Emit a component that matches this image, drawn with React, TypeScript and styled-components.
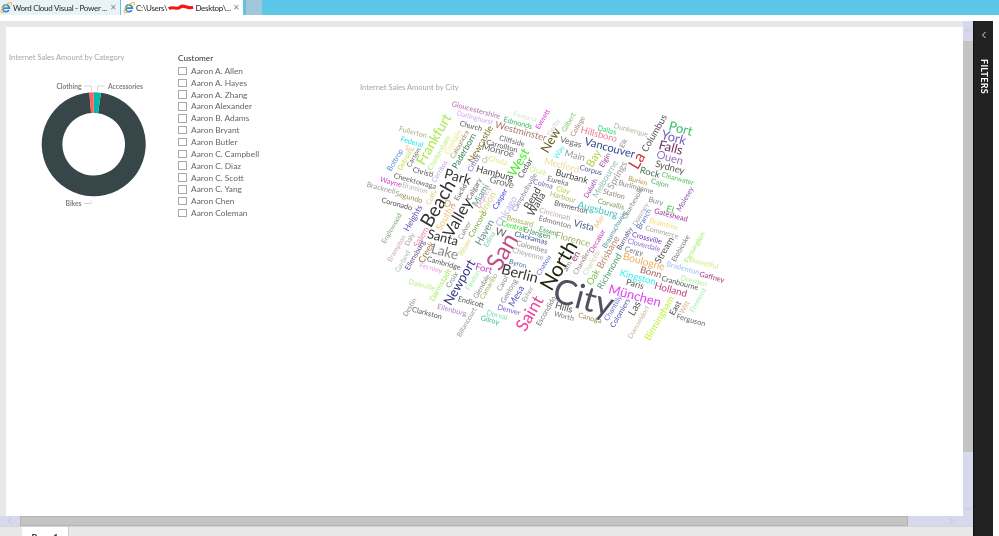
import React from "react";
import styled, { createGlobalStyle } from "styled-components";

const Global = createGlobalStyle`
  html, body { margin: 0; padding: 0; background: #fff; }
  body { font-family: Lato, "Open Sans", "Liberation Sans", sans-serif; }
`;

type W = [string, number, number, number, string, number?];
const words: W[] = [
  ["Gloucestershire",476,110,8.5,"#b070b0"],["Darlinghurst",475,117,8,"#d9a8f0"],["Fontana",525,116,8,"#cfeacc"],["Edmonds",518,123,8.5,"#3fb56a"],
  ["Everett",542,119,8,"#d030d0",-60],["Westminster",521,131,11,"#a87868"],["Church",471,126,8.5,"#555"],["Fullerton",413,132,8.5,"#b0b088"],
  ["Frankfurt",433,139,16,"#a8e850",-60],["Federal",412,142,8.5,"#20e8e8"],["Sur",410,148,8,"#f8b878"],["Bottrop",395,160,8.5,"#5590d8",-60],
  ["Detroit",404,160,8,"#c0e050",-60],["Carson",413,157,8,"#666",-60],["Cheltenham",439,153,8.5,"#b8f080",-60],["Chehalis",453,142,8.5,"#f0e880",-60],
  ["Caloundra",459,144,8,"#a09060",-60],["Paderborn",464,151,10,"#308050",-60],["Newcastle",480,144,10.5,"#807020",-60],["Cliffside",512,141,8.5,"#666"],
  ["Carrollton",502,146,8.5,"#555"],["Monroe",498,150,11,"#666"],["Chula",498,160,9,"#e8e880"],["Or",485,159,8,"#aaa",-60],["Citrus",474,163,8.5,"#8070c0",-60],
  ["Cerritos",439,171,8,"#b0a0e0",-60],["Christi",423,172,8.5,"#555"],["Cheektowaga",415,181,8.5,"#666"],["Branson",415,188,8.5,"#bbb"],["Wayne",391,182,8.5,"#d040d0"],
  ["Bracknell",381,188,8.5,"#999"],["Segundo",409,197,8.5,"#a09060"],["Coronado",397,204,8.5,"#555"],["Park",458,176,16,"#333"],["Hamburg",495,173,11,"#444"],
  ["Grove",502,182,11,"#666"],["West",518,162,15,"#40f020",-60],["Cedar",525,168,9.5,"#555",-60],["Chalk",538,171,8.5,"#d0f090"],["Colma",543,184,8.5,"#8060b0"],
  ["Campbellsville",524,192,8,"#8080a0",-60],["Bend",532,198,12,"#444",-60],["Walla",536,204,12,"#444",-60],["Miami",480,195,10.5,"#60a080",-60],["Calgary",474,189,8.5,"#666",-60],
  ["Euclid",460,192,8,"#666",-60],["Coffs",431,197,8,"#d0d080",-60],["Beach",437,203,22,"#333",-60],["De",450,204,11,"#c0a870"],["South",444,219,11,"#f0c870",-60],
  ["Valley",457,217,19,"#333",-60],["Santa",443,237,15,"#333"],["Culver",464,230,8,"#888",-60],["Concord",477,224,9,"#70a030",-60],["Haven",484,232,11.5,"#608888",-60],
  ["Union",487,203,11,"#d8d880",-60],["Drancy",483,197,9,"#e0a0e0",-60],["Edina",489,239,8,"#80d0a0",-60],["Casper",500,199,8.5,"#4040e0",-60],["Chicago",506,211,11,"#c0b0f0",-60],
  ["Brossard",520,221,8.5,"#a8b050"],["Central",513,226,8.5,"#30e030"],["Erlangen",537,233,8.5,"#409060"],["Essen",548,231,8.5,"#50a060"],["Clackamas",531,238,8.5,"#405090"],
  ["W",501,232,12,"#666"],["Colombes",532,247,8.5,"#888"],["Cheyenne",528,254,8.5,"#aaa"],["San",501,251,28,"#c05088",-60],["Byron",518,263,8,"#5070a0"],["Berlin",520,273,17,"#333"],
  ["Chatou",543,265,8,"#6070d0",-60],["Lake",445,251,16,"#888"],["Ribier",465,247,8.5,"#e0e080",-60],["Creek",426,252,10.5,"#a07840",-60],["Salem",421,237,10,"#f080b0",-60],
  ["Heights",413,218,10,"#6050b0",-60],["Daly",409,239,8,"#999",-60],["Englewood",391,228,8,"#80a880",-60],["Brampton",396,248,8,"#d0a8b0",-60],["Garland",402,261,8,"#a8c0a8",-60],
  ["Ellensburg",415,255,8.5,"#604890",-60],["Cambridge",444,263,8.5,"#555"],["Fernley",431,268,8.5,"#f0a0e8"],["Fort",484,268,11,"#c040d0"],["Newport",459,282,15,"#303080",-60],
  ["Croix",452,280,8.5,"#888",-60],["Findon",473,280,8.5,"#a0f0a0",-60],["Glendale",481,286,8,"#888",-60],["Camarillo",488,286,8,"#a0b060",-60],["Carol",502,283,8,"#888",-60],
  ["Daleville",422,285,8.5,"#c0f090"],["Darmstadt",440,285,9,"#a0f060",-60],["Geelong",509,291,8.5,"#888",-60],["Mesa",516,296,11,"#5050c0",-60],["Esher",527,294,8,"#999",-60],
  ["Saint",529,313,20,"#f040a0",-60],["Endicott",471,302,8.5,"#555"],["Eilenburg",452,310,8.5,"#b080c8"],["Denver",509,310,8.5,"#8060d0"],["Dorval",497,315,8.5,"#80e0b0"],
  ["Gilroy",490,320,8.5,"#40c0a0"],["Billancourt",466,322,8,"#999",-60],["Destin",409,307,8,"#888",-60],["Clarkston",427,313,8.5,"#555"],["Escondido",546,311,8.5,"#777",-60],
  ["Bremerton",571,207,8.5,"#555"],["Augsburg",598,209,11.5,"#40c0c0"],["Corvallis",611,204,8.5,"#80a060"],["Courbevoie",632,203,8,"#888",-60],["Downey",640,214,8,"#aaa",-60],
  ["Branch",644,219,8.5,"#5070c0",-60],["Bury",656,201,8.5,"#888"],["El",670,209,11,"#50c050"],["Molesey",685,199,8.5,"#8050a0",-60],["Gateshead",671,215,8.5,"#a030a0"],
  ["Cincinnati",555,214,8.5,"#c0a8a8"],["Edmonton",555,222,8.5,"#777"],["Vista",584,225,11,"#406080"],["Mer",599,221,9,"#f0c080",-60],["Braintree",664,224,8.5,"#f0e080"],
  ["Commerce",662,232,8.5,"#aaa"],["Florence",573,239,11,"#a0b060"],["Decatur",597,241,8.5,"#c040c0",-60],["Braunschweig",614,229,8,"#5090a0",-60],["Burnaby",624,238,8,"#405080",-60],
  ["Brisbane",608,252,11,"#c08860",-60],["Crossville",647,238,8.5,"#7030c0"],["Cloverdale",644,245,8.5,"#9070d0"],["Cergy",634,251,8.5,"#777"],["Stream",664,250,11,"#555",-60],
  ["Etobicoke",680,248,8,"#777",-60],["Farmington",694,247,8,"#90f060",-60],["Bountiful",704,263,8.5,"#d0f080"],["Bradenton",683,268,8.5,"#a0c0f0"],["Gaffney",712,277,8.5,"#a04080"],
  ["Dresden",694,281,8.5,"#b0f0a0"],["Fremont",698,300,8.5,"#a0f0b0",-60],["Boulogne",644,261,12,"#f0b060"],["Bonn",651,272,11,"#a06060"],["Cranbourne",680,283,8.5,"#555"],
  ["Kingston",638,277,11,"#30f0f0"],["Paris",635,284,10,"#555"],["Holland",671,289,11.5,"#c04080"],["München",635,295,15,"#e040f0"],["Birmingham",659,318,11,"#c0f040",-60],
  ["East",675,308,9.5,"#444",-60],["Witt",684,307,8,"#d0b080",-60],["Ferguson",691,320,8.5,"#666"],["Duesseldorf",638,322,8,"#c8b8a0",-60],["Las",634,308,12,"#555",-60],
  ["Colomiers",620,313,8.5,"#5050a0",-60],["Chantilly",613,308,8.5,"#7070d0",-60],["City",584,296,40,"#555060"],["Hills",564,307,11,"#555"],["Worth",564,316,8.5,"#777"],
  ["Canoga",590,318,8.5,"#a09060"],["North",558,265,24,"#222810",-60],["Oak",593,277,11,"#80c050",-60],["Richmond",609,271,10.5,"#50a070",-60],["Charlotte",591,262,8,"#d0d0b0",-60],
  ["Chandler",581,262,8,"#a08080",-60],["en",575,256,11,"#a04070",-60],["am",567,266,9,"#888",-60],
  ["New",550,140,15,"#606020",-60],["Vegas",571,142,10,"#666"],["Way",559,152,8.5,"#40f0e0",-60],["Main",575,155,11,"#999"],["Medford",562,165,11,"#f0d8a0"],["Bay",593,158,13,"#b0d040",-60],
  ["Gilbert",568,122,8,"#80c060",-60],["College",577,126,8,"#a08878",-60],["Derby",553,127,8,"#ccc",-60],["Hillsboro",599,134,11,"#f08098"],["Dallas",607,130,8.5,"#30e070"],
  ["Dunkerque",631,130,8.5,"#b0b8a0"],["Vancouver",610,147,13,"#304890"],["Elk",623,143,8,"#888",-60],["Elgin",605,160,8.5,"#a04090",-60],["Columbus",654,133,11,"#555",-60],
  ["Port",681,128,15,"#30c060"],["York",674,137,15,"#7060c0"],["Falls",671,147,15,"#703060"],["Ouen",670,157,13,"#a070c0"],["Sydney",670,167,11,"#555"],["La",636,160,19,"#d03040",-60],
  ["Rock",650,172,11,"#407050"],["Clearwater",678,178,8,"#50c050"],["Cajon",660,183,8.5,"#60b070"],["Burien",638,180,8,"#c09040"],["Burlingame",636,187,8.5,"#888"],
  ["Springs",617,175,11,"#999",-60],["Melbourne",605,179,10,"#90c0b0",-60],["Duluth",590,188,8,"#a040a0",-60],["Corpus",591,170,8.5,"#6050a0"],["Burbank",572,176,10.5,"#444"],
  ["Eureka",558,181,8.5,"#666"],["Clay",563,190,8.5,"#c0d050"],["Harbour",563,197,8.5,"#b0c060"],["Station",614,194,8.5,"#988878"],
];

const customers = ["Aaron A. Allen","Aaron A. Hayes","Aaron A. Zhang","Aaron Alexander","Aaron B. Adams","Aaron Bryant","Aaron Butler","Aaron C. Campbell","Aaron C. Diaz","Aaron C. Scott","Aaron C. Yang","Aaron Chen","Aaron Coleman"];

const Page = styled.div`
  width: 999px; height: 536px; overflow: hidden; background: #fff;
  display: flex; flex-direction: column; filter: blur(0.3px);
`;
const TabStrip = styled.div`
  height: 15px; flex: none; display: flex; gap: 1px;
  background: linear-gradient(#58c6ea, #62c8e8);
`;
const Tab = styled.div<{ $active?: boolean; $w: number }>`
  width: ${p => p.$w}px; box-sizing: border-box; display: flex; align-items: center; gap: 1px;
  padding: 0 3px 0 ${p => (p.$active ? 2 : 0)}px; background: ${p => (p.$active ? "#fff" : "#e9f3f7")};
  font-size: 8px; letter-spacing: -0.3px; font-weight: 500; color: #333; white-space: nowrap; overflow: hidden;
`;
const TabLabel = styled.span`
  flex: 1; min-width: 0; display: flex; align-items: center;
`;
const Close = styled.span`
  color: #8a8a8a; font-size: 8px; line-height: 1; flex: none; font-family: "Liberation Sans", sans-serif;
`;
const EmptyTab = styled.div`
  width: 16px; background: #a0c8d8; border-left: 1px solid #7fb4c8; margin-left: 1px;
`;
const Gap = styled.div`height: 6px; flex: none; background: #fff;`;
const Body = styled.div`flex: 1; display: flex; min-height: 0; padding-right: 6px;`;
const Report = styled.div`
  width: 973px; flex: none; display: flex; flex-direction: column; background: #e8e8e8;
`;
const Work = styled.div`height: 495px; flex: none; display: flex;`;
const Surround = styled.div`
  width: 963px; flex: none; box-sizing: border-box; padding: 6px 0 0 6px; background: #e8e8e8; display: flex;
`;
const Canvas = styled.div`
  flex: 1; background: #fff; display: flex; padding-top: 26px; align-items: flex-start;
`;
const ChartCol = styled.div`width: 172px; flex: none;`;
const ChartTitle = styled.div<{ $indent?: number; $top?: number }>`
  font-size: 7.55px; line-height: 10px; color: #a6a6a6; white-space: nowrap;
  padding-left: ${p => p.$indent ?? 0}px; margin-top: ${p => p.$top ?? 0}px;
`;
const DonutSvg = styled.svg`
  display: block; width: 172px; height: 145px; margin-top: 2px;
  font-size: 6.7px; font-weight: 700; fill: #808080;
`;
const SlicerCol = styled.div`width: 182px; flex: none;`;
const SlicerHead = styled.div`font-size: 8.2px; line-height: 10px; color: #333; margin-bottom: 2px;`;
const SlicerRow = styled.div`
  height: 11.85px; display: flex; align-items: center; gap: 4.5px;
  font-size: 8.35px; color: #666; white-space: nowrap;
`;
const Box = styled.span`
  width: 6.5px; height: 6.5px; border: 1px solid #a8a8a8; flex: none;
`;
const CloudCol = styled.div`width: 380px; flex: none;`;
const CloudSvg = styled.svg`display: block; width: 380px; height: 250px; margin-top: 2px;`;
const VBar = styled.div`width: 10px; flex: none; display: flex; flex-direction: column; background: #d8d8ec;`;
const ArrowCell = styled.div<{ $h: number; $w?: number }>`
  height: ${p => p.$h}px; flex: none; display: flex; align-items: center; justify-content: center;
  width: ${p => (p.$w ? `${p.$w}px` : "auto")};
`;
const VThumb = styled.div`height: 411px; flex: none; background: #c4c4c4;`;
const VRest = styled.div`flex: 1; display: flex; align-items: flex-end; justify-content: center; padding-bottom: 3px;`;
const HBar = styled.div`height: 10px; flex: none; display: flex; background: #d8d8ec; box-sizing: border-box;`;
const HThumb = styled.div`width: 888px; flex: none; background: #c4c4c4; border: 1px solid #b4b4b4; box-sizing: border-box;`;
const HRest = styled.div`flex: 1; display: flex; justify-content: flex-end; align-items: center; padding-right: 18px;`;
const PageTabs = styled.div`flex: 1; min-height: 0; padding-left: 22px; background: #e8e8e8; border-top: 1px solid #d4d4d4;`;
const PageTab = styled.div`
  width: 47px; height: 100%; background: #fff; text-align: center; font-size: 9px; line-height: 21px;
  font-weight: 700; color: #333; overflow: hidden; border-right: 1px solid #ccc; box-sizing: border-box;
`;
const Filters = styled.div`
  width: 20px; flex: none; background: #222; border-left: 1px solid #111; box-sizing: border-box;
  display: flex; flex-direction: column; align-items: center; padding-top: 10px; gap: 20px;
`;
const FiltersLabel = styled.div`
  writing-mode: vertical-rl; color: #fff; font-size: 9px; font-weight: 700; letter-spacing: 0.3px; line-height: 10px;
`;
const Scribble = styled.svg`width: 26px; height: 8px; flex: none; margin: 0 1px;`;

const polar = (deg: number, r: number, cx = 93.7, cy = 144.3) => {
  const a = ((deg - 90) * Math.PI) / 180;
  return [cx + r * Math.cos(a), cy + r * Math.sin(a)];
};
const arc = (from: number, to: number) => {
  const [a, b] = polar(from, 52), [c, d] = polar(to, 52), [e, f] = polar(to, 31.3), [g, h] = polar(from, 31.3);
  const big = to - from > 180 ? 1 : 0;
  return `M${a} ${b}A52 52 0 ${big} 1 ${c} ${d}L${e} ${f}A31.3 31.3 0 ${big} 0 ${g} ${h}Z`;
};

const IEIcon = () => (
  <svg width="12" height="13" viewBox="0 0 12 12" style={{ flex: "none" }}>
    <path d="M2.6 6.6h6.8a3.4 3.4 0 1 0-.5 2" fill="none" stroke="#2f86d6" strokeWidth="1.7" />
    <path d="M1.2 10.8C-.4 8.6 6.5 1.6 10.4 1c1.4-.2 1.4 1.4.5 2.8M1.2 10.8c1 .9 2.6.2 3.6-.4" fill="none" stroke="#f0c030" strokeWidth="1.1" />
  </svg>
);

const Chev = ({ d, stroke = "#c4c4c8" }: { d: string; stroke?: string }) => (
  <svg width="8" height="8" viewBox="0 0 8 8"><path d={d} fill="none" stroke={stroke} strokeWidth="1" /></svg>
);

export default function App() {
  return (
    <Page>
      <Global />
      <TabStrip>
        <Tab $w={120}>
          <IEIcon />
          <TabLabel>Word Cloud Visual - Power ...</TabLabel>
          <Close>✕</Close>
        </Tab>
        <Tab $w={122} $active>
          <IEIcon />
          <TabLabel>
            C:\Users\
            <Scribble viewBox="0 0 30 8"><path d="M1 5C6 1 10 7 14 3s8 3 15 0" fill="none" stroke="#f01818" strokeWidth="3.6" /></Scribble>
            Desktop\...
          </TabLabel>
          <Close>✕</Close>
        </Tab>
        <EmptyTab />
      </TabStrip>
      <Gap />
      <Body>
        <Report>
          <Work>
            <Surround>
              <Canvas>
                <ChartCol>
                  <ChartTitle $indent={3}>Internet Sales Amount by Category</ChartTitle>
                  <DonutSvg viewBox="6 65 172 145">
                    <path d={arc(8, 355.2)} fill="#374649" />
                    <path d={arc(0, 8)} fill="#01B8AA" />
                    <path d={arc(355.2, 360)} fill="#FD625E" />
                    <path d="M84 86h7.5v5M104.500 86h-7v5M84 203.500h7v-3" fill="none" stroke="#ccc" strokeWidth="0.8" />
                    <text x="81.500" y="88.700" textAnchor="end">Clothing</text>
                    <text x="108" y="88.700">Accessories</text>
                    <text x="81.500" y="206.300" textAnchor="end">Bikes</text>
                  </DonutSvg>
                </ChartCol>
                <SlicerCol>
                  <SlicerHead>Customer</SlicerHead>
                  {customers.map(c => (
                    <SlicerRow key={c}><Box />{c}</SlicerRow>
                  ))}
                </SlicerCol>
                <CloudCol>
                  <ChartTitle $top={30}>Internet Sales Amount by City</ChartTitle>
                  <CloudSvg viewBox="360 95 380 250">
                    {words.map(([t, x, y, s, c, r]) => (
                      <text key={t} x={x} y={y} fontSize={s * 0.86} fill={c} textAnchor="middle" dominantBaseline="central" transform={`rotate(${r ?? 15} ${x} ${y})`}>{t}</text>
                    ))}
                  </CloudSvg>
                </CloudCol>
              </Canvas>
            </Surround>
            <VBar>
              <ArrowCell $h={20}><Chev d="M1 5.500L4 2.500l3 3" /></ArrowCell>
              <VThumb />
              <VRest><Chev d="M1 2.500L4 5.500l3-3" /></VRest>
            </VBar>
          </Work>
          <HBar>
            <ArrowCell $h={10} $w={20}><Chev d="M5.500 1L2.500 4l3 3" /></ArrowCell>
            <HThumb />
            <HRest><Chev d="M2.500 1L5.500 4l-3 3" /></HRest>
          </HBar>
          <PageTabs><PageTab>Page 1</PageTab></PageTabs>
        </Report>
        <Filters>
          <Chev d="M5.500 1L2.500 4l3 3" stroke="#ddd" />
          <FiltersLabel>FILTERS</FiltersLabel>
        </Filters>
      </Body>
    </Page>
  );
}
